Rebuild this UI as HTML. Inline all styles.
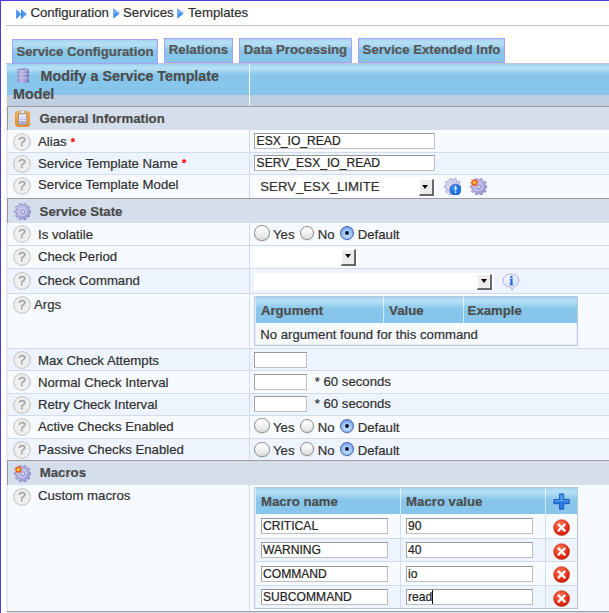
<!DOCTYPE html>
<html>
<head>
<meta charset="utf-8">
<title>Templates</title>
<style>
html,body{margin:0;padding:0;}
body{width:609px;height:613px;overflow:hidden;background:#fff;position:relative;
 font-family:"Liberation Sans",Arial,Helvetica,sans-serif;font-size:13.2px;color:#303030;-webkit-text-stroke:0.2px;}
.abs{position:absolute;}
#btop{left:0;top:0;width:609px;height:1.2px;background:#4a3be4;}
#bleft{left:0;top:0;width:1.15px;height:613px;background:#4a3be4;}
#path{left:31px;top:5.4px;height:16px;line-height:16px;white-space:nowrap;color:#2e2e2e;}
#path span.t{position:absolute;top:0;}
#hr{left:6px;top:25px;width:603px;height:1px;background:#bdbdbd;}
.tab{position:absolute;top:38px;height:22.5px;box-sizing:content-box;border:1px solid #a99ff0;
 background:linear-gradient(to bottom,#a4d6f0 0,#b3def4 3px,#b1dcf3 5.5px,#9bd1ee 8.5px,#8cc9eb 11px,#87c6ea 13px);font-weight:bold;color:#555;
 line-height:22px;text-align:center;white-space:nowrap;}
.tab.cur{top:39px;height:23px;line-height:23px;z-index:3;}
#tbl{left:6px;top:0;width:603px;height:612px;}
#tbg{left:6px;top:63px;width:603px;height:548px;background:#f7faff;border-left:1px solid #f0f0f4;border-bottom:1px solid #9c9c9c;box-sizing:content-box;}
#tbot{left:7px;top:612px;width:602px;height:1px;background:#d5dfeb;}
#ttop{left:6px;top:63px;width:603px;height:1px;background:#bcc4dd;z-index:2;}
.row{position:absolute;left:7px;width:602px;}
.row:before{content:"";position:absolute;left:242px;top:0;width:1px;height:100%;background:#d1dceb;}
.one{background:#f7faff;border-bottom:1px solid #d1dceb;box-shadow:inset 1px 0 0 #dde6f2;}
.two{background:#edf4fe;border-bottom:1px solid #d1dceb;box-shadow:inset 1px 0 0 #dde6f2;}
.last{border-bottom:none;}
.lvl{background:#d5dfeb;border-top:1px solid #9c9c9c;border-left:1px solid #9c9c9c;font-weight:bold;color:#4a4a4a;width:601px;}
.lvl:before,.hdr:before{display:none;}
.hdr{background:#bfcfe1;}
.hdr .hb{position:absolute;left:0;top:0;width:100%;height:32px;background:linear-gradient(to bottom,#9dd3ef 0,#9dd3ef 1.5px,#b0dcf3 3px,#b5dff4 4.5px,#b1dcf3 6.5px,#9bd1ee 9px,#8cc9eb 11.5px,#87c6ea 13px);}
.hd{font-size:14.3px;font-weight:bold;color:#4d4d4d;line-height:18px;white-space:nowrap;}
.t{position:absolute;white-space:nowrap;line-height:16px;}
.ast{color:#f00;font-size:11px;font-weight:bold;position:relative;top:-0.5px;left:0.5px;}
.inp{position:absolute;box-sizing:border-box;background:#fff;border:1px solid #bdbdbd;border-top-color:#979797;border-left-color:#a2a2a2;
 font-size:12.1px;line-height:14.9px;padding:0 1px 0 1.6px;white-space:nowrap;overflow:hidden;color:#222;}
.rad{position:absolute;border-radius:50%;border:1px solid #8c8c8c;
 background:linear-gradient(#ffffff,#f4f4f4 45%,#dedede);box-shadow:0 0.5px 1px rgba(0,0,0,.18);}
.rad.on{border-color:#4467b5;background:radial-gradient(circle at 50% 60%,#d4e6fb 0,#a9cbf5 40%,#6e9fe6 75%,#5b8ee0 100%);}
.rad.on:after{content:"";position:absolute;left:50%;top:50%;width:4.2px;height:4.2px;margin:-2.1px 0 0 -2.1px;border-radius:50%;background:#0c1630;}
.selw{position:absolute;background:#fff;}
.sbtn{position:absolute;box-sizing:border-box;width:14.6px;height:17.1px;background:#ededed;border-style:solid;border-width:1px 2px 2px 1px;border-color:#fff #686868 #686868 #fff;}
.sbtn b{position:absolute;width:0;height:0;border-left:3.9px solid transparent;border-right:3.9px solid transparent;border-top:4.3px solid #000;}
.it{position:absolute;border:1px solid #b9c7dc;background:#f7faff;box-shadow:inset 0 0 0 1px #e6edf7;}
.ith{position:absolute;background:linear-gradient(to bottom,#a4d6f0 0,#b3def4 3px,#b1dcf3 5.5px,#9bd1ee 8.5px,#8cc9eb 11px,#87c6ea 13px);font-weight:bold;color:#4d4d4d;}
.ith span,.itd span{position:absolute;white-space:nowrap;line-height:16px;}
.ith i{position:absolute;top:0;width:1px;height:100%;background:#fff;opacity:.6;}
.mrow{position:absolute;left:1px;width:321px;border-top:1px solid #d1dceb;}
.mrow i{position:absolute;top:0;width:1px;height:100%;background:#d1dceb;}
.mone{background:#f7faff;}
.mtwo{background:#edf4fe;}
.inp.m{padding-left:1px;}
.cursor{display:inline-block;width:1px;height:14px;background:#111;vertical-align:-3px;}
</style>
</head>
<body>
<div class="abs" id="path"><svg class="abs" style="left:-15.5px;top:3.2px;width:11.4px;height:10.4px" viewBox="0 0 11.4 10.4"><defs><linearGradient id="ag" x1="0" y1="0" x2="1" y2="0"><stop offset="0" stop-color="#3f86e8"/><stop offset="1" stop-color="#6aa6f3"/></linearGradient></defs><path d="M0.2,0.2 L5.7,5.2 L0.2,10.2Z" fill="url(#ag)"/><path d="M5.0,0.2 L11.2,5.2 L5.0,10.2Z" fill="url(#ag)"/></svg><span class="t" style="left:-0.6px">Configuration</span><svg class="abs" style="left:81.5px;top:3px;width:7px;height:11px" viewBox="0 0 7 11"><path d="M0.3,0.3 L6.7,5.5 L0.3,10.7Z" fill="#3d8af0"/><path d="M0.3,0.3 L6.7,5.5 L0.3,5.5Z" fill="#86b9f8" opacity=".7"/></svg><span class="t" style="left:92px">Services</span><svg class="abs" style="left:146.2px;top:3px;width:7px;height:11px" viewBox="0 0 7 11"><path d="M0.3,0.3 L6.7,5.5 L0.3,10.7Z" fill="#3d8af0"/><path d="M0.3,0.3 L6.7,5.5 L0.3,5.5Z" fill="#86b9f8" opacity=".7"/></svg><span class="t" style="left:157px">Templates</span></div>
<div class="abs" id="hr"></div>

<div class="tab cur" style="left:12px;width:144px;">Service Configuration</div>
<div class="tab" style="left:164px;width:67px;">Relations</div>
<div class="tab" style="left:239px;width:111px;">Data Processing</div>
<div class="tab" style="left:358px;width:145px;">Service Extended Info</div>

<div class="abs" id="tbg"></div>
<div class="row hdr" style="top:63px;height:43px;"><div class="hb"></div><div class="abs" style="left:242px;top:0;width:1px;height:43px;background:#fff"></div><svg class="abs" style="left:9.7px;top:4.7px;width:12.4px;height:15.2px" viewBox="0 0 12.4 15.2">
<defs><linearGradient id="dbg" x1="0" x2="1" y1="0" y2="0"><stop offset="0" stop-color="#8784c5"/><stop offset=".3" stop-color="#b7b5e3"/><stop offset=".55" stop-color="#a9a7da"/><stop offset="1" stop-color="#6a67ae"/></linearGradient></defs>
<path d="M0.3,1.6 C0.3,0.2 12.1,0.2 12.1,1.6 L12.1,13.6 C12.1,15.4 0.3,15.4 0.3,13.6Z" fill="url(#dbg)"/>
<path d="M0.5,1.5 C0.5,0.3 11.9,0.3 11.9,1.5 C11.9,2.7 0.5,2.7 0.5,1.5Z" fill="#9694cf"/>
<path d="M0.6,2.5 C2,3.1 10.4,3.1 11.8,2.5" fill="none" stroke="#d9d8f2" stroke-width=".7"/>
<path d="M0.6,5.7 C2,6.3 10.4,6.3 11.8,5.7 M0.6,9.5 C2,10.1 10.4,10.1 11.8,9.5" fill="none" stroke="#d2d1ee" stroke-width=".8"/>
<path d="M0.6,11.6 C2,12.2 10.4,12.2 11.8,11.6" fill="none" stroke="#bfbde6" stroke-width=".6"/>
</svg><span class="abs hd" style="left:33.5px;top:3.5px;">Modify a Service Template</span><span class="abs hd" style="left:6px;top:22.2px;">Model</span></div>
<div class="row lvl" style="top:106px;height:23px;"><svg class="abs" style="left:7.00px;top:3.00px;width:15.2px;height:17px" viewBox="0 0 15.2 17">
<defs><linearGradient id="cbg" x1="0" y1="0" x2="0" y2="1"><stop offset="0" stop-color="#f9b35a"/><stop offset="1" stop-color="#ef8a1e"/></linearGradient></defs>
<rect x="0.5" y="1.6" width="14.2" height="14.9" rx="2.4" fill="url(#cbg)" stroke="#ea8a22" stroke-width=".8"/>
<rect x="5.6" y="0.3" width="4" height="3.6" rx="1" fill="#e3e3e3" stroke="#a8a8a8" stroke-width=".6"/>
<rect x="3.4" y="3.9" width="8.4" height="10.8" fill="#f1f1fa" stroke="#8a8a90" stroke-width=".9"/>
<rect x="4.2" y="6.2" width="6.8" height="1.5" fill="#d5d4ee"/><rect x="4.2" y="8.6" width="6.8" height="1.6" fill="#bfbee4"/><rect x="4.2" y="11" width="6.8" height="2.9" fill="#a9a8d8"/>
</svg><span class="t" style="left:31.40px;top:4.44px;">General Information</span></div>
<div class="row one" style="top:130px;height:22px;"><svg class="abs" style="left:5.80px;top:2.70px;width:18px;height:18px" viewBox="0 0 18 18"><circle cx="9" cy="9" r="8.3" fill="#efefef" stroke="#cbcbcb" stroke-width="1.3"/><text x="9" y="13.1" text-anchor="middle" font-family="Liberation Sans, sans-serif" font-size="13.6" fill="#a2a2a2" stroke="#a2a2a2" stroke-width=".4">?</text></svg><span class="t" style="left:31.00px;top:4.04px;">Alias <span class="ast">*</span></span><div class="inp" style="left:247.00px;top:3.00px;width:181px;height:16px">ESX_IO_READ</div></div>
<div class="row two" style="top:153px;height:21px;"><svg class="abs" style="left:5.80px;top:1.80px;width:18px;height:18px" viewBox="0 0 18 18"><circle cx="9" cy="9" r="8.3" fill="#efefef" stroke="#cbcbcb" stroke-width="1.3"/><text x="9" y="13.1" text-anchor="middle" font-family="Liberation Sans, sans-serif" font-size="13.6" fill="#a2a2a2" stroke="#a2a2a2" stroke-width=".4">?</text></svg><span class="t" style="left:31.00px;top:2.54px;">Service Template Name <span class="ast">*</span></span><div class="inp" style="left:247.00px;top:2.00px;width:181px;height:16px">SERV_ESX_IO_READ</div></div>
<div class="row one last" style="top:175px;height:23px;"><svg class="abs" style="left:5.80px;top:2.30px;width:18px;height:18px" viewBox="0 0 18 18"><circle cx="9" cy="9" r="8.3" fill="#efefef" stroke="#cbcbcb" stroke-width="1.3"/><text x="9" y="13.1" text-anchor="middle" font-family="Liberation Sans, sans-serif" font-size="13.6" fill="#a2a2a2" stroke="#a2a2a2" stroke-width=".4">?</text></svg><span class="t" style="left:31.00px;top:2.34px;">Service Template Model</span><div class="selw" style="left:247.10px;top:2.90px;width:181.30px;height:18.00px"></div><div class="sbtn" style="left:412.20px;top:3.60px;height:17.1px"><b style="left:2.00px;top:5.20px"></b></div><span class="t" style="left:253.30px;top:4.04px;">SERV_ESX_LIMITE</span><svg class="abs" style="left:436.80px;top:2.80px;width:17.6px;height:17.6px" viewBox="0 0 16 16"><defs><linearGradient id="gg1" x1="0" y1="0" x2="1" y2="1"><stop offset="0" stop-color="#e2e1f6"/><stop offset=".5" stop-color="#cfceec"/><stop offset="1" stop-color="#b3b1de"/></linearGradient></defs><path d="M13.88,6.80 L15.64,7.03 L15.64,8.97 L13.88,9.20 L13.46,10.49 L14.75,11.71 L13.61,13.27 L12.05,12.43 L10.96,13.22 L11.28,14.97 L9.44,15.56 L8.68,13.96 L7.32,13.96 L6.56,15.56 L4.72,14.97 L5.04,13.22 L3.95,12.43 L2.39,13.27 L1.25,11.71 L2.54,10.49 L2.12,9.20 L0.36,8.97 L0.36,7.03 L2.12,6.80 L2.54,5.51 L1.25,4.29 L2.39,2.73 L3.95,3.57 L5.04,2.78 L4.72,1.03 L6.56,0.44 L7.32,2.04 L8.68,2.04 L9.44,0.44 L11.28,1.03 L10.96,2.78 L12.05,3.57 L13.61,2.73 L14.75,4.29 L13.46,5.51Z" fill="url(#gg1)" stroke="#9f9dd3" stroke-width="0.8" stroke-linejoin="round"/><circle cx="8" cy="8" r="3.4" fill="none" stroke="#d2d1f0" stroke-width="1.2" opacity=".8"/><circle cx="8" cy="8" r="1.7" fill="#dcdcf2" stroke="#8583c4" stroke-width=".7"/><circle cx="10.5" cy="10.7" r="5.1" fill="#1d72e0" stroke="#1559b8" stroke-width="0.5"/><circle cx="9.6" cy="9" r="2.6" fill="#5aa3f5" opacity=".55"/><rect x="9.8" y="7.6" width="1.5" height="3.6" rx=".4" fill="#fff"/><rect x="9.8" y="12.1" width="1.5" height="1.6" rx=".4" fill="#fff"/></svg><svg class="abs" style="left:462.80px;top:2.60px;width:17.6px;height:17.6px" viewBox="0 0 16 16"><defs><linearGradient id="gg2" x1="0" y1="0" x2="1" y2="1"><stop offset="0" stop-color="#d2d1f1"/><stop offset=".5" stop-color="#b2b0de"/><stop offset="1" stop-color="#8684c6"/></linearGradient></defs><path d="M13.88,6.80 L15.64,7.03 L15.64,8.97 L13.88,9.20 L13.46,10.49 L14.75,11.71 L13.61,13.27 L12.05,12.43 L10.96,13.22 L11.28,14.97 L9.44,15.56 L8.68,13.96 L7.32,13.96 L6.56,15.56 L4.72,14.97 L5.04,13.22 L3.95,12.43 L2.39,13.27 L1.25,11.71 L2.54,10.49 L2.12,9.20 L0.36,8.97 L0.36,7.03 L2.12,6.80 L2.54,5.51 L1.25,4.29 L2.39,2.73 L3.95,3.57 L5.04,2.78 L4.72,1.03 L6.56,0.44 L7.32,2.04 L8.68,2.04 L9.44,0.44 L11.28,1.03 L10.96,2.78 L12.05,3.57 L13.61,2.73 L14.75,4.29 L13.46,5.51Z" fill="url(#gg2)" stroke="#8e8ccb" stroke-width="0.8" stroke-linejoin="round"/><circle cx="8" cy="8" r="3.4" fill="none" stroke="#d2d1f0" stroke-width="1.2" opacity=".8"/><circle cx="8" cy="8" r="1.7" fill="#dcdcf2" stroke="#8583c4" stroke-width=".7"/><path d="M7.90,4.20 L6.22,5.12 L6.76,6.96 L4.92,6.42 L4.00,8.10 L3.08,6.42 L1.24,6.96 L1.78,5.12 L0.10,4.20 L1.78,3.28 L1.24,1.44 L3.08,1.98 L4.00,0.30 L4.92,1.98 L6.76,1.44 L6.22,3.28Z" fill="#ee4a26"/><circle cx="4.0" cy="4.2" r="1.9" fill="#fb9a1c"/><circle cx="4.0" cy="4.2" r="1.1" fill="#ffd633"/></svg></div>
<div class="row lvl" style="top:198px;height:24px;"><svg class="abs" style="left:5.80px;top:3.60px;width:17.4px;height:17.4px" viewBox="0 0 16 16"><defs><linearGradient id="gg3" x1="0" y1="0" x2="1" y2="1"><stop offset="0" stop-color="#d2d1f1"/><stop offset=".5" stop-color="#b2b0de"/><stop offset="1" stop-color="#8684c6"/></linearGradient></defs><path d="M13.88,6.80 L15.64,7.03 L15.64,8.97 L13.88,9.20 L13.46,10.49 L14.75,11.71 L13.61,13.27 L12.05,12.43 L10.96,13.22 L11.28,14.97 L9.44,15.56 L8.68,13.96 L7.32,13.96 L6.56,15.56 L4.72,14.97 L5.04,13.22 L3.95,12.43 L2.39,13.27 L1.25,11.71 L2.54,10.49 L2.12,9.20 L0.36,8.97 L0.36,7.03 L2.12,6.80 L2.54,5.51 L1.25,4.29 L2.39,2.73 L3.95,3.57 L5.04,2.78 L4.72,1.03 L6.56,0.44 L7.32,2.04 L8.68,2.04 L9.44,0.44 L11.28,1.03 L10.96,2.78 L12.05,3.57 L13.61,2.73 L14.75,4.29 L13.46,5.51Z" fill="url(#gg3)" stroke="#8e8ccb" stroke-width="0.8" stroke-linejoin="round"/><circle cx="8" cy="8" r="3.4" fill="none" stroke="#d2d1f0" stroke-width="1.2" opacity=".8"/><circle cx="8" cy="8" r="1.7" fill="#dcdcf2" stroke="#8583c4" stroke-width=".7"/></svg><span class="t" style="left:31.60px;top:5.14px;">Service State</span></div>
<div class="row one" style="top:223px;height:22px;"><svg class="abs" style="left:5.80px;top:2.30px;width:18px;height:18px" viewBox="0 0 18 18"><circle cx="9" cy="9" r="8.3" fill="#efefef" stroke="#cbcbcb" stroke-width="1.3"/><text x="9" y="13.1" text-anchor="middle" font-family="Liberation Sans, sans-serif" font-size="13.6" fill="#a2a2a2" stroke="#a2a2a2" stroke-width=".4">?</text></svg><span class="t" style="left:31.00px;top:3.84px;">Is volatile</span><span class="rad" style="left:247.10px;top:2.40px;width:13.60px;height:13.60px"></span><span class="t" style="left:266.00px;top:3.64px;">Yes</span><span class="rad" style="left:292.90px;top:3.20px;width:12.00px;height:12.00px"></span><span class="t" style="left:310.70px;top:3.64px;">No</span><span class="rad on" style="left:332.80px;top:3.20px;width:12.00px;height:12.00px"></span><span class="t" style="left:350.70px;top:3.64px;">Default</span></div>
<div class="row one" style="top:246px;height:22px;"><svg class="abs" style="left:5.80px;top:2.30px;width:18px;height:18px" viewBox="0 0 18 18"><circle cx="9" cy="9" r="8.3" fill="#efefef" stroke="#cbcbcb" stroke-width="1.3"/><text x="9" y="13.1" text-anchor="middle" font-family="Liberation Sans, sans-serif" font-size="13.6" fill="#a2a2a2" stroke="#a2a2a2" stroke-width=".4">?</text></svg><span class="t" style="left:31.00px;top:2.94px;">Check Period</span><div class="selw" style="left:247.20px;top:1.90px;width:103.00px;height:18.00px"></div><div class="sbtn" style="left:334.20px;top:2.60px;height:17.1px"><b style="left:2.40px;top:4.90px"></b></div></div>
<div class="row two" style="top:269px;height:24px;"><svg class="abs" style="left:5.80px;top:3.00px;width:18px;height:18px" viewBox="0 0 18 18"><circle cx="9" cy="9" r="8.3" fill="#efefef" stroke="#cbcbcb" stroke-width="1.3"/><text x="9" y="13.1" text-anchor="middle" font-family="Liberation Sans, sans-serif" font-size="13.6" fill="#a2a2a2" stroke="#a2a2a2" stroke-width=".4">?</text></svg><span class="t" style="left:31.00px;top:3.64px;">Check Command</span><div class="selw" style="left:247.20px;top:4.00px;width:240.00px;height:17.00px"></div><div class="sbtn" style="left:470.30px;top:4.70px;height:16.0px"><b style="left:2.50px;top:4.10px"></b></div><svg class="abs" style="left:494.50px;top:3.60px;width:18px;height:18px" viewBox="0 0 18 18">
<defs><linearGradient id="bbg" x1="0" y1="0" x2="1" y2="1"><stop offset="0" stop-color="#f7f8fe"/><stop offset="1" stop-color="#d9daf3"/></linearGradient></defs>
<path d="M9,1 C13.6,1 16.9,3.9 16.9,7.5 C16.9,10.4 14.8,12.6 12.4,13.5 L10.2,17 L8.6,14 C4.2,13.8 1.1,11 1.1,7.5 C1.1,3.9 4.4,1 9,1Z" fill="url(#bbg)" stroke="#b0b2e2" stroke-width="1"/>
<text x="9.2" y="11.8" text-anchor="middle" font-family="Liberation Serif, serif" font-weight="bold" font-size="12.5" fill="#1a6de2" stroke="#1a6de2" stroke-width=".5">i</text></svg></div>
<div class="row one" style="top:294px;height:54px;"><svg class="abs" style="left:5.80px;top:1.80px;width:18px;height:18px" viewBox="0 0 18 18"><circle cx="9" cy="9" r="8.3" fill="#efefef" stroke="#cbcbcb" stroke-width="1.3"/><text x="9" y="13.1" text-anchor="middle" font-family="Liberation Sans, sans-serif" font-size="13.6" fill="#a2a2a2" stroke="#a2a2a2" stroke-width=".4">?</text></svg><span class="t" style="left:27.00px;top:3.14px;">Args</span><div class="it" style="left:247px;top:2px;width:322px;height:48px">
<div class="ith" style="left:1px;top:0;width:321px;height:26.4px"><span style="left:4.9px;top:5.9px">Argument</span><span style="left:133.1px;top:5.9px">Value</span><span style="left:211.6px;top:5.9px">Example</span>
<i style="left:127px"></i><i style="left:207px"></i></div>
<div class="itd"><span style="left:5.2px;top:30px">No argument found for this command</span></div>
</div></div>
<div class="row two" style="top:349px;height:21px;"><svg class="abs" style="left:5.80px;top:2.30px;width:18px;height:18px" viewBox="0 0 18 18"><circle cx="9" cy="9" r="8.3" fill="#efefef" stroke="#cbcbcb" stroke-width="1.3"/><text x="9" y="13.1" text-anchor="middle" font-family="Liberation Sans, sans-serif" font-size="13.6" fill="#a2a2a2" stroke="#a2a2a2" stroke-width=".4">?</text></svg><span class="t" style="left:31.00px;top:3.54px;">Max Check Attempts</span><div class="inp" style="left:247.00px;top:3.00px;width:53px;height:16px"></div></div>
<div class="row one" style="top:371px;height:22px;"><svg class="abs" style="left:5.80px;top:2.30px;width:18px;height:18px" viewBox="0 0 18 18"><circle cx="9" cy="9" r="8.3" fill="#efefef" stroke="#cbcbcb" stroke-width="1.3"/><text x="9" y="13.1" text-anchor="middle" font-family="Liberation Sans, sans-serif" font-size="13.6" fill="#a2a2a2" stroke="#a2a2a2" stroke-width=".4">?</text></svg><span class="t" style="left:31.00px;top:3.94px;">Normal Check Interval</span><div class="inp" style="left:247.00px;top:3.00px;width:53px;height:16px"></div><span class="t" style="left:307.70px;top:3.14px;">* 60 seconds</span></div>
<div class="row two" style="top:394px;height:21px;"><svg class="abs" style="left:5.80px;top:1.80px;width:18px;height:18px" viewBox="0 0 18 18"><circle cx="9" cy="9" r="8.3" fill="#efefef" stroke="#cbcbcb" stroke-width="1.3"/><text x="9" y="13.1" text-anchor="middle" font-family="Liberation Sans, sans-serif" font-size="13.6" fill="#a2a2a2" stroke="#a2a2a2" stroke-width=".4">?</text></svg><span class="t" style="left:31.00px;top:3.04px;">Retry Check Interval</span><div class="inp" style="left:247.00px;top:2.00px;width:53px;height:16px"></div><span class="t" style="left:307.70px;top:2.44px;">* 60 seconds</span></div>
<div class="row one" style="top:416px;height:22px;"><svg class="abs" style="left:5.80px;top:2.00px;width:18px;height:18px" viewBox="0 0 18 18"><circle cx="9" cy="9" r="8.3" fill="#efefef" stroke="#cbcbcb" stroke-width="1.3"/><text x="9" y="13.1" text-anchor="middle" font-family="Liberation Sans, sans-serif" font-size="13.6" fill="#a2a2a2" stroke="#a2a2a2" stroke-width=".4">?</text></svg><span class="t" style="left:31.00px;top:2.64px;">Active Checks Enabled</span><span class="rad" style="left:247.10px;top:1.90px;width:13.60px;height:13.60px"></span><span class="t" style="left:266.00px;top:3.94px;">Yes</span><span class="rad" style="left:292.90px;top:2.70px;width:12.00px;height:12.00px"></span><span class="t" style="left:310.70px;top:3.94px;">No</span><span class="rad on" style="left:332.80px;top:2.70px;width:12.00px;height:12.00px"></span><span class="t" style="left:350.70px;top:3.94px;">Default</span></div>
<div class="row two last" style="top:439px;height:21px;"><svg class="abs" style="left:5.80px;top:1.50px;width:18px;height:18px" viewBox="0 0 18 18"><circle cx="9" cy="9" r="8.3" fill="#efefef" stroke="#cbcbcb" stroke-width="1.3"/><text x="9" y="13.1" text-anchor="middle" font-family="Liberation Sans, sans-serif" font-size="13.6" fill="#a2a2a2" stroke="#a2a2a2" stroke-width=".4">?</text></svg><span class="t" style="left:31.00px;top:2.74px;">Passive Checks Enabled</span><span class="rad" style="left:247.10px;top:2.50px;width:13.60px;height:13.60px"></span><span class="t" style="left:266.00px;top:3.84px;">Yes</span><span class="rad" style="left:292.90px;top:3.30px;width:12.00px;height:12.00px"></span><span class="t" style="left:310.70px;top:3.84px;">No</span><span class="rad on" style="left:332.80px;top:3.30px;width:12.00px;height:12.00px"></span><span class="t" style="left:350.70px;top:3.84px;">Default</span></div>
<div class="row lvl" style="top:460px;height:24px;"><svg class="abs" style="left:5.80px;top:3.50px;width:17.4px;height:17.4px" viewBox="0 0 16 16"><defs><linearGradient id="gg4" x1="0" y1="0" x2="1" y2="1"><stop offset="0" stop-color="#d2d1f1"/><stop offset=".5" stop-color="#b2b0de"/><stop offset="1" stop-color="#8684c6"/></linearGradient></defs><path d="M13.88,6.80 L15.64,7.03 L15.64,8.97 L13.88,9.20 L13.46,10.49 L14.75,11.71 L13.61,13.27 L12.05,12.43 L10.96,13.22 L11.28,14.97 L9.44,15.56 L8.68,13.96 L7.32,13.96 L6.56,15.56 L4.72,14.97 L5.04,13.22 L3.95,12.43 L2.39,13.27 L1.25,11.71 L2.54,10.49 L2.12,9.20 L0.36,8.97 L0.36,7.03 L2.12,6.80 L2.54,5.51 L1.25,4.29 L2.39,2.73 L3.95,3.57 L5.04,2.78 L4.72,1.03 L6.56,0.44 L7.32,2.04 L8.68,2.04 L9.44,0.44 L11.28,1.03 L10.96,2.78 L12.05,3.57 L13.61,2.73 L14.75,4.29 L13.46,5.51Z" fill="url(#gg4)" stroke="#8e8ccb" stroke-width="0.8" stroke-linejoin="round"/><circle cx="8" cy="8" r="3.4" fill="none" stroke="#d2d1f0" stroke-width="1.2" opacity=".8"/><circle cx="8" cy="8" r="1.7" fill="#dcdcf2" stroke="#8583c4" stroke-width=".7"/><path d="M7.90,4.20 L6.22,5.12 L6.76,6.96 L4.92,6.42 L4.00,8.10 L3.08,6.42 L1.24,6.96 L1.78,5.12 L0.10,4.20 L1.78,3.28 L1.24,1.44 L3.08,1.98 L4.00,0.30 L4.92,1.98 L6.76,1.44 L6.22,3.28Z" fill="#ee4a26"/><circle cx="4.0" cy="4.2" r="1.9" fill="#fb9a1c"/><circle cx="4.0" cy="4.2" r="1.1" fill="#ffd633"/></svg><span class="t" style="left:31.80px;top:3.94px;">Macros</span></div>
<div class="row one last" style="top:485px;height:126px;"><svg class="abs" style="left:5.80px;top:2.70px;width:18px;height:18px" viewBox="0 0 18 18"><circle cx="9" cy="9" r="8.3" fill="#efefef" stroke="#cbcbcb" stroke-width="1.3"/><text x="9" y="13.1" text-anchor="middle" font-family="Liberation Sans, sans-serif" font-size="13.6" fill="#a2a2a2" stroke="#a2a2a2" stroke-width=".4">?</text></svg><span class="t" style="left:31.00px;top:3.34px;">Custom macros</span><div class="it" style="left:247px;top:2px;width:322px;height:120px"><div class="ith" style="left:1px;top:0;width:321px;height:25.7px"><span style="left:4.9px;top:5.5px">Macro name</span><span style="left:150.1px;top:5.5px">Macro value</span><i style="left:144px"></i><i style="left:289px"></i><svg class="abs" style="left:297.1px;top:5.3px;width:17.2px;height:17.2px" viewBox="0 0 19 19"><path d="M7.2,1 H11.8 V7.2 H18 V11.8 H11.8 V18 H7.2 V11.8 H1 V7.2 H7.2Z" fill="#2b79e0" stroke="#1c58b8" stroke-width="1" stroke-linejoin="miter"/><path d="M8,2 H11 V8 H17 V9.4 H2 V8 H8Z" fill="#5aa4f2" opacity=".8"/></svg></div><div class="mrow mone" style="top:25.7px;height:24.30px;border-top:none;"><i style="left:144px"></i><i style="left:289px"></i><div class="inp m" style="left:5px;top:4.30px;width:127px;height:16.3px">CRITICAL</div><div class="inp m" style="left:150px;top:4.30px;width:127px;height:16.3px">90</div><svg class="abs" style="left:297.1px;top:5.3px;width:17.2px;height:17.2px" viewBox="0 0 18 18"><defs><radialGradient id="rg0" cx=".4" cy=".3" r=".8"><stop offset="0" stop-color="#ff7a5a"/><stop offset=".6" stop-color="#e8301a"/><stop offset="1" stop-color="#b81606"/></radialGradient></defs><circle cx="9" cy="9" r="8.3" fill="url(#rg0)" stroke="#c4290f" stroke-width=".6"/><path d="M5.8,5.8 L12.2,12.2 M12.2,5.8 L5.8,12.2" stroke="#fff" stroke-width="2.4" stroke-linecap="round"/></svg></div><div class="mrow mtwo" style="top:50px;height:22.00px;"><i style="left:144px"></i><i style="left:289px"></i><div class="inp m" style="left:5px;top:3.00px;width:127px;height:16.3px">WARNING</div><div class="inp m" style="left:150px;top:3.00px;width:127px;height:16.3px">40</div><svg class="abs" style="left:297.1px;top:3.65px;width:17.2px;height:17.2px" viewBox="0 0 18 18"><defs><radialGradient id="rg1" cx=".4" cy=".3" r=".8"><stop offset="0" stop-color="#ff7a5a"/><stop offset=".6" stop-color="#e8301a"/><stop offset="1" stop-color="#b81606"/></radialGradient></defs><circle cx="9" cy="9" r="8.3" fill="url(#rg1)" stroke="#c4290f" stroke-width=".6"/><path d="M5.8,5.8 L12.2,12.2 M12.2,5.8 L5.8,12.2" stroke="#fff" stroke-width="2.4" stroke-linecap="round"/></svg></div><div class="mrow mone" style="top:73px;height:23.00px;"><i style="left:144px"></i><i style="left:289px"></i><div class="inp m" style="left:5px;top:3.70px;width:127px;height:16.3px">COMMAND</div><div class="inp m" style="left:150px;top:3.70px;width:127px;height:16.3px">io</div><svg class="abs" style="left:297.1px;top:4.3px;width:17.2px;height:17.2px" viewBox="0 0 18 18"><defs><radialGradient id="rg2" cx=".4" cy=".3" r=".8"><stop offset="0" stop-color="#ff7a5a"/><stop offset=".6" stop-color="#e8301a"/><stop offset="1" stop-color="#b81606"/></radialGradient></defs><circle cx="9" cy="9" r="8.3" fill="url(#rg2)" stroke="#c4290f" stroke-width=".6"/><path d="M5.8,5.8 L12.2,12.2 M12.2,5.8 L5.8,12.2" stroke="#fff" stroke-width="2.4" stroke-linecap="round"/></svg></div><div class="mrow mtwo" style="top:97px;height:22.00px;"><i style="left:144px"></i><i style="left:289px"></i><div class="inp m" style="left:5px;top:3.20px;width:127px;height:16.3px">SUBCOMMAND</div><div class="inp m" style="left:150px;top:3.20px;width:127px;height:16.3px">read<span class="cursor"></span></div><svg class="abs" style="left:297.1px;top:3.95px;width:17.2px;height:17.2px" viewBox="0 0 18 18"><defs><radialGradient id="rg3" cx=".4" cy=".3" r=".8"><stop offset="0" stop-color="#ff7a5a"/><stop offset=".6" stop-color="#e8301a"/><stop offset="1" stop-color="#b81606"/></radialGradient></defs><circle cx="9" cy="9" r="8.3" fill="url(#rg3)" stroke="#c4290f" stroke-width=".6"/><path d="M5.8,5.8 L12.2,12.2 M12.2,5.8 L5.8,12.2" stroke="#fff" stroke-width="2.4" stroke-linecap="round"/></svg></div></div></div>
<div class="abs" id="ttop"></div>
<div class="abs" id="tbot"></div>
<div class="abs" id="btop"></div>
<div class="abs" id="bleft"></div>
</body>
</html>
